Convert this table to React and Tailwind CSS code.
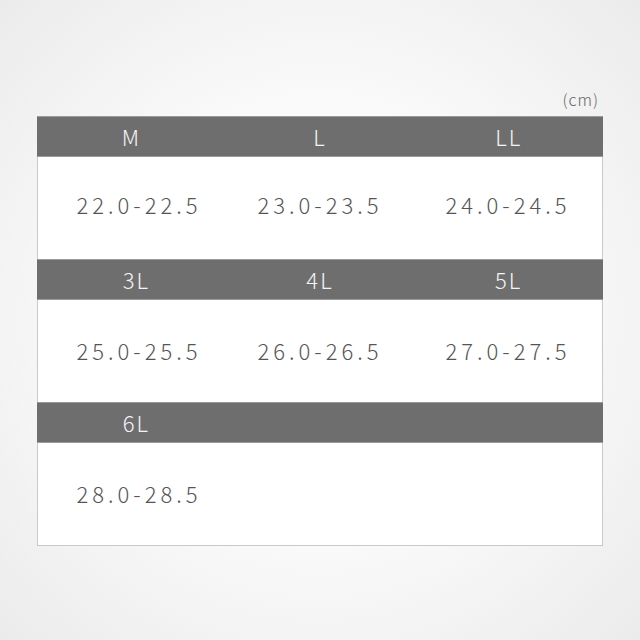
const rows = [
  [
    ['M', '22.0-22.5'],
    ['L', '23.0-23.5'],
    ['LL', '24.0-24.5'],
  ],
  [
    ['3L', '25.0-25.5'],
    ['4L', '26.0-26.5'],
    ['5L', '27.0-27.5'],
  ],
  [
    ['6L', '28.0-28.5'],
    ['', ''],
    ['', ''],
  ],
]

const App = () => {
  return (
    <div
      className="flex h-[640px] w-[640px] flex-col bg-[radial-gradient(circle_at_center,#ffffff_30%,#ebebeb_100%)] px-[37px] pt-[89px] font-light"
      style={{ fontFamily: '"Noto Sans CJK JP", "Noto Sans", sans-serif' }}
    >
      <div className="flex h-[27px] justify-end pr-[4px] text-[16px] leading-[20px] tracking-[1px] text-[#666]">
        (cm)
      </div>
      <div className="border-x border-b border-[#c9c9c9] bg-white">
        {rows.map((row, i) => (
          <div key={i}>
            <div className="-mx-px grid h-[41px] grid-cols-3 border-y border-[#9a9a9a] bg-[#6f6e6e]">
              {row.map(([size], j) => (
                <div
                  key={j}
                  className={`flex items-center justify-center text-[22px] tracking-[2px] text-[#f4f4f4] ${j === 0 && i > 0 ? 'pl-[10px]' : ''}`}
                >
                  {size}
                </div>
              ))}
            </div>
            <div className="grid h-[102px] grid-cols-3">
              {row.map(([, cm], j) => (
                <div
                  key={j}
                  className={`flex items-center justify-center text-[22px] tracking-[4px] text-[#555] ${i === 0 ? 'pb-[8px]' : 'pb-[2px]'} ${j === 0 ? 'pl-[14px]' : ''}`}
                >
                  {cm}
                </div>
              ))}
            </div>
          </div>
        ))}
      </div>
    </div>
  )
}

export default App
